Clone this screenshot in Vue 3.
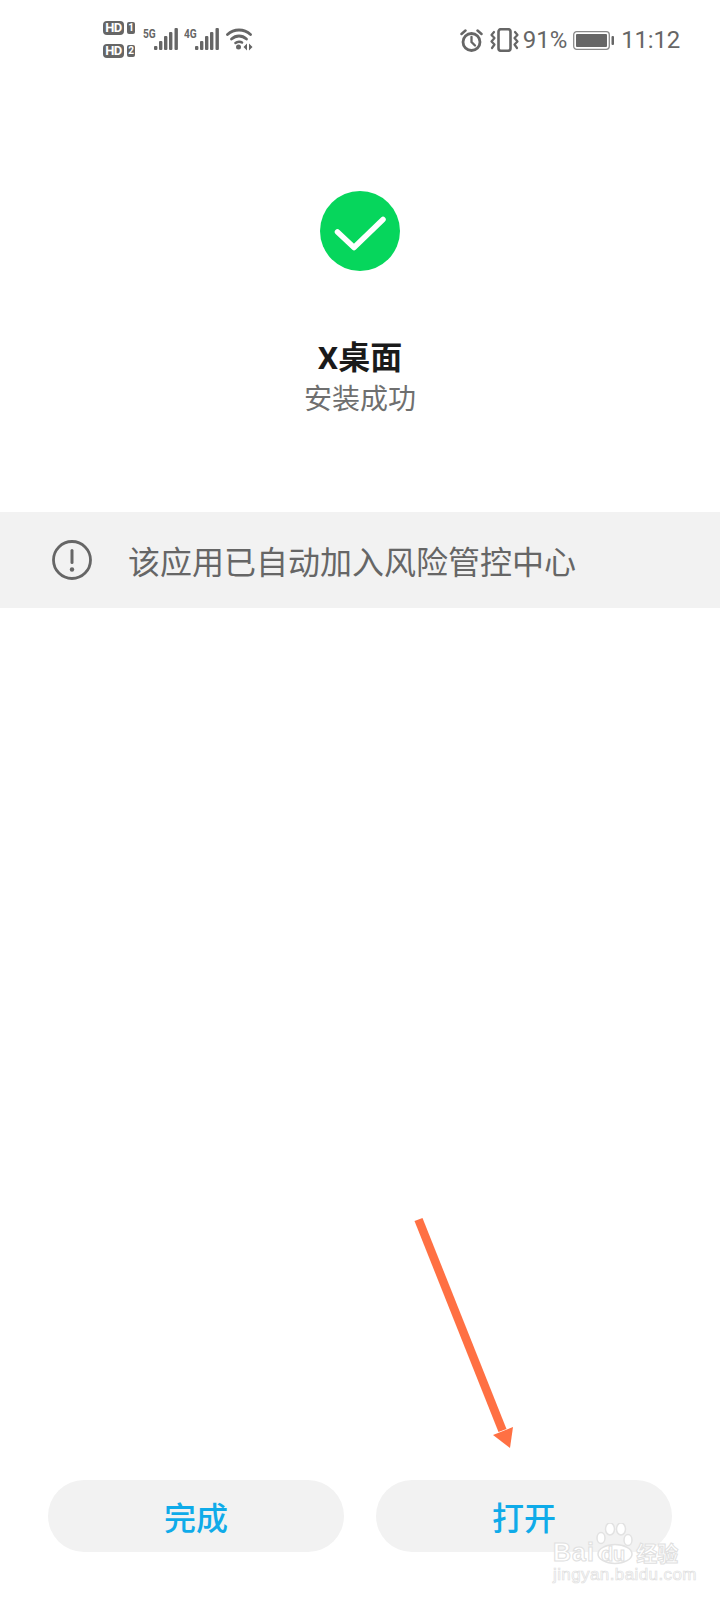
<script setup>
const signals = [
  { net: '5G', id: 'a' },
  { net: '4G', id: 'b' },
]
const bars = [
  { x: 0, h: 4 },
  { x: 5, h: 9 },
  { x: 10, h: 14 },
  { x: 15, h: 18 },
  { x: 20.500, h: 22 },
]
</script>

<template>
  <div class="page">
    <div class="status-bar">
      <div class="status-left">
        <div class="hd-stack">
          <div class="hd-row"><span class="hd">HD</span><span class="sim">1</span></div>
          <div class="hd-row"><span class="hd">HD</span><span class="sim">2</span></div>
        </div>
        <div v-for="s in signals" :key="s.id" class="signal">
          <span class="net">{{ s.net }}</span>
          <svg class="bars" width="24" height="22" viewBox="0 0 24 22">
            <rect v-for="b in bars" :key="b.x" :x="b.x" :y="22 - b.h" width="3.400" :height="b.h" rx="1" fill="#666" />
          </svg>
        </div>
        <svg class="wifi" width="27" height="24" viewBox="0 0 27 24" fill="none" stroke="#666" stroke-linecap="round">
          <path d="M1.500 7.500C8 1.500 18 1.500 24.500 7.500" stroke-width="2.800" />
          <path d="M5.500 12C10 8 16 8 20.500 12" stroke-width="2.800" />
          <path d="M9.500 16C11.500 14.500 14.500 14.500 16 15.500" stroke-width="2.600" />
          <circle cx="12.500" cy="20" r="2.500" fill="#666" stroke="none" />
          <path d="M21 16.500V23.500L17.500 20ZM23 16.500V23.500L26.500 20Z" fill="#666" stroke="none" />
        </svg>
      </div>
      <div class="status-right">
        <svg width="23" height="23" viewBox="0 0 23 23" fill="none" stroke="#666" stroke-linecap="round">
          <circle cx="11.500" cy="13" r="8.500" stroke-width="2.800" />
          <path d="M11.500 8V13L15 16.500" stroke-width="2.300" />
          <path d="M1.500 5L5.500 1.500M21.500 5L17.500 1.500" stroke-width="2.500" />
        </svg>
        <svg class="vibrate" width="29" height="24" viewBox="0 0 29 24" fill="none" stroke="#666" stroke-linecap="round" stroke-linejoin="round">
          <rect x="8.500" y="1.200" width="12" height="21.600" rx="2.500" stroke-width="2.600" />
          <path d="M4 4L1.500 7L4.500 10L1.500 13.500L4.500 16.500L2 20" stroke-width="2.200" />
          <path d="M25 4L27.500 7L24.500 10L27.500 13.500L24.500 16.500L27 20" stroke-width="2.200" />
        </svg>
        <span class="pct">91%</span>
        <svg class="battery" width="41" height="19" viewBox="0 0 41 19">
          <rect x="0.700" y="0.700" width="35.600" height="17.600" rx="3" fill="none" stroke="#8a8a8a" stroke-width="1.300" />
          <rect x="3" y="3" width="31" height="13" rx="1" fill="#666" />
          <rect x="38.500" y="5" width="2.500" height="9" rx="1" fill="#666" />
        </svg>
        <span class="clock">11:12</span>
      </div>
    </div>

    <div class="result">
      <svg class="check" width="80" height="80" viewBox="0 0 80 80">
        <circle cx="40" cy="40" r="40" fill="#06d65c" />
        <path d="M17.500 41L34 56.500L63 28.500" fill="none" stroke="#fff" stroke-width="5.500" stroke-linecap="round" stroke-linejoin="round" />
      </svg>
      <div class="app-name">X桌面</div>
      <div class="app-state">安装成功</div>
    </div>

    <div class="notice">
      <svg width="40" height="40" viewBox="0 0 40 40">
        <circle cx="20" cy="20" r="18.500" fill="none" stroke="#666" stroke-width="2.800" />
        <rect x="18.500" y="9" width="3" height="15" rx="1.500" fill="#666" />
        <circle cx="20" cy="29.500" r="2.200" fill="#666" />
      </svg>
      <span class="notice-text">该应用已自动加入风险管控中心</span>
    </div>

    <div class="footer">
      <button class="action">完成</button>
      <button class="action">打开</button>
    </div>

    <!-- annotation drawn on top of the screenshot -->
    <svg class="arrow" width="110" height="240" viewBox="0 0 110 240">
      <path d="M4.500 6L12.500 3L96.500 214L88.500 217Z" fill="#ff7043" />
      <path d="M83 220L103 212L100 233Z" fill="#ff7043" />
    </svg>

    <div class="watermark">
      <svg class="paw" width="40" height="44" viewBox="0 0 40 44" fill="#fff" stroke="#e2e2e2" stroke-width="1.500">
        <ellipse cx="15" cy="6" rx="4.500" ry="6" />
        <ellipse cx="26" cy="6" rx="4.500" ry="6" />
        <ellipse cx="6" cy="15" rx="4" ry="5.500" />
        <ellipse cx="33" cy="17" rx="4" ry="5.500" />
        <ellipse cx="20" cy="31" rx="17" ry="9.500" />
      </svg>
      <div class="wm-line"><span>Bai</span><span class="wm-du">du</span><span class="wm-cn">经验</span></div>
      <div class="wm-url">jingyan.baidu.com</div>
    </div>
  </div>
</template>

<style>
html, body { margin: 0; background: #fff; }
</style>

<style scoped>
.page {
  position: relative;
  width: 720px;
  height: 1600px;
  display: flex;
  flex-direction: column;
  background: #fff;
  overflow: hidden;
  font-family: Roboto, "Noto Sans CJK SC", sans-serif;
}

.status-bar {
  height: 80px;
  display: flex;
  justify-content: space-between;
  align-items: flex-start;
  padding: 0 40px 0 103px;
  box-sizing: border-box;
  color: #666;
}
.status-left { display: flex; align-items: flex-start; padding-top: 20px; }
.hd-stack { display: flex; flex-direction: column; gap: 9px; width: 40px; padding-top: 1px; }
.hd-row { display: flex; align-items: center; gap: 3px; }
.hd {
  width: 21px;
  height: 14px;
  background: #666;
  color: #fff;
  border-radius: 4px;
  font-size: 13px;
  line-height: 14px;
  font-weight: 700;
  letter-spacing: -0.5px;
  text-align: center;
}
.sim {
  width: 8px;
  height: 12px;
  background: #666;
  color: #fff;
  border-radius: 2px;
  font-size: 10px;
  line-height: 12px;
  font-weight: 700;
  text-align: center;
}
.signal { display: flex; align-items: flex-start; margin-top: 8px; margin-right: 6px; }
.net {
  width: 11px;
  font-size: 13px;
  line-height: 11px;
  font-weight: 700;
  color: #666;
  transform: scaleX(0.78);
  transform-origin: left center;
}
.wifi { margin-top: 7px; margin-left: 1px; }

.status-right { display: flex; align-items: center; padding-top: 28px; height: 24px; }
.vibrate { margin-left: 7px; }
.pct { margin-left: 4px; font-size: 24px; line-height: 24px; }
.battery { margin-left: 6px; }
.clock { margin-left: 7px; font-size: 24px; line-height: 24px; letter-spacing: -0.2px; }

.result { display: flex; flex-direction: column; align-items: center; padding-top: 111px; }
.check { display: block; }
.app-name {
  margin-top: 66px;
  font-size: 32px;
  line-height: 42px;
  font-weight: 700;
  color: #1a1a1a;
}
.app-state { font-size: 28px; line-height: 42px; color: #6f6f6f; }

.notice {
  margin-top: 91px;
  height: 96px;
  display: flex;
  align-items: center;
  padding-left: 52px;
  background: #f2f2f2;
}
.notice-text { margin-left: 36px; font-size: 32px; color: #666; }

.footer {
  margin-top: auto;
  display: flex;
  gap: 32px;
  padding: 0 48px 48px;
}
.action {
  flex: 1;
  height: 72px;
  border: none;
  border-radius: 36px;
  background: #f2f2f2;
  color: #0fabe9;
  font-family: inherit;
  font-size: 32px;
  font-weight: 500;
  padding: 0;
}

.arrow { position: absolute; left: 410px; top: 1215px; }

.watermark { position: absolute; left: 553px; top: 1523px; width: 130px; height: 62px; }
.paw { position: absolute; left: 42px; top: 0; }
.wm-line {
  position: absolute;
  left: 0;
  top: 15px;
  display: flex;
  align-items: baseline;
  font-family: "Liberation Sans", sans-serif;
  font-size: 25px;
  line-height: 28px;
  font-weight: 700;
  letter-spacing: 1px;
  color: #fff;
  -webkit-text-stroke: 1px #e0e0e0;
}
.wm-du { margin-left: 6px; font-size: 20px; letter-spacing: 0; }
.wm-cn { margin-left: 11px; font-family: "Noto Sans CJK SC", sans-serif; font-size: 21px; line-height: 24px; letter-spacing: 0; }
.wm-url {
  position: absolute;
  left: 0;
  top: 43px;
  font-family: "Liberation Sans", sans-serif;
  font-size: 17px;
  line-height: 18px;
  letter-spacing: 0.4px;
  color: #fff;
  -webkit-text-stroke: 0.7px #e0e0e0;
  white-space: nowrap;
}
</style>
